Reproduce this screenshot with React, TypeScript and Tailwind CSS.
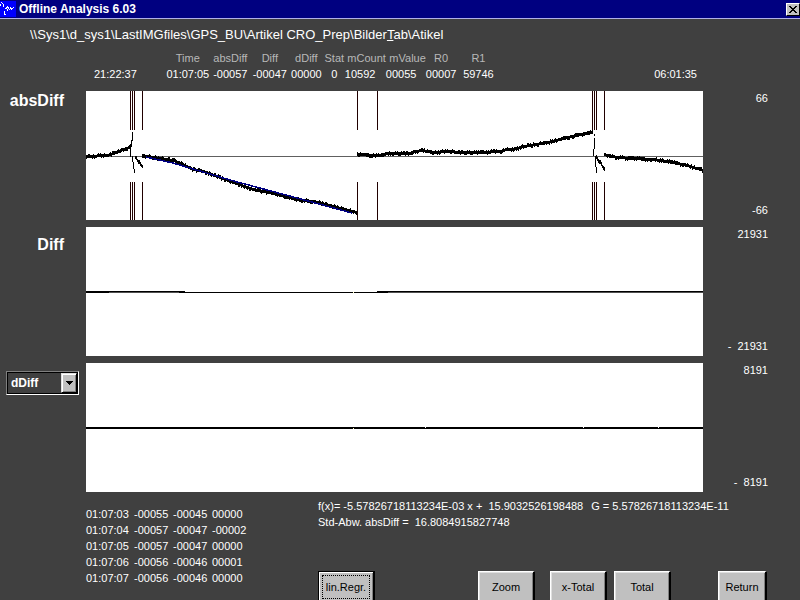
import { useState } from 'react';
import type { ReactNode } from 'react';
import clsx from 'clsx';

type Point = [number, number];

const COLUMNS: { label: string; value: string; width: string; th?: string; td?: string }[] = [
  { label: 'Time', value: '01:07:05', width: 'w-[44px]' },
  { label: 'absDiff', value: '-00057', width: 'w-[41px]' },
  { label: 'Diff', value: '-00047', width: 'w-[38px]' },
  { label: 'dDiff', value: '00000', width: 'w-[35px]' },
  { label: 'Stat', value: '0', width: 'w-[21px]' },
  { label: 'mCount', value: '10592', width: 'w-[41px]', th: 'text-right', td: 'text-left' },
  { label: 'mValue', value: '00055', width: 'w-[40px]', th: 'text-right', td: 'text-left' },
  { label: 'R0', value: '00007', width: 'w-[30px]' },
  { label: 'R1', value: '59746', width: 'w-[44px]' },
];

const LOG = [
  ['01:07:03', '-00055', '-00045', '00000'],
  ['01:07:04', '-00057', '-00047', '-00002'],
  ['01:07:05', '-00057', '-00047', '00000'],
  ['01:07:06', '-00056', '-00046', '00001'],
  ['01:07:07', '-00056', '-00046', '00000'],
];

const MARKERS = [44, 46, 48, 56, 271, 291, 506, 508, 510, 518];

const TRACES: Point[][] = [
  [[0, 65], [21, 64], [32, 60], [45, 55]],
  [[49, 66], [53, 71], [57, 76]],
  [[56, 65], [61, 65], [67, 66], [87, 69], [99, 74], [107, 78], [117, 80], [131, 85], [144, 90], [167, 98], [187, 102], [211, 108], [227, 110], [244, 114], [258, 118], [271, 121]],
  [[271, 63], [294, 64], [301, 62], [314, 62], [324, 62], [329, 60], [336, 59], [347, 61], [361, 60], [374, 61], [391, 61], [416, 60], [419, 58], [427, 58], [437, 55], [461, 51], [481, 46], [494, 43], [507, 41]],
  [[510, 66], [514, 71], [519, 80]],
  [[518, 63], [524, 65], [544, 67], [567, 68], [587, 71], [601, 74], [617, 79]],
];

/** One short vertical stroke per sample column, with a little measuring noise */
function noisyPath(points: Point[]) {
  let d = '';
  let seed = points[0][0] + 7;
  for (let i = 0; i < points.length - 1; i++) {
    const [x0, y0] = points[i];
    const [x1, y1] = points[i + 1];
    for (let x = x0; x < x1; x++) {
      seed = (seed * 1664525 + 1013904223) % 4294967296;
      const noise = Math.floor(seed / 65536) % 10;
      const y = Math.round(y0 + ((y1 - y0) * (x - x0)) / (x1 - x0));
      const top = noise < 3 ? y - 2 : y - 1;
      const bottom = noise > 6 ? y + 3 : y + 2;
      d += `M${x + 0.5} ${top}V${bottom}`;
    }
  }
  return d;
}

function Plot({ label, children }: { label: string; children: ReactNode }) {
  return (
    <svg
      role="img"
      aria-label={label}
      viewBox="0 0 617 129"
      preserveAspectRatio="none"
      shapeRendering="crispEdges"
      className="block h-[129px] w-full bg-white"
    >
      {children}
    </svg>
  );
}

function Scale({ max, min }: { max: string; min: string }) {
  return (
    <div className="flex flex-col justify-between pr-8 pb-[3px] text-right leading-[14px] whitespace-pre">
      <span>{max}</span>
      <span>{min}</span>
    </div>
  );
}

function PushButton({ children, className, focused }: { children: ReactNode; className?: string; focused?: boolean }) {
  return (
    <button
      type="button"
      className={clsx(
        'h-8 bg-[#c0c0c0] text-center text-[11px] leading-4 text-black',
        focused
          ? 'border border-r-2 border-black p-[3px] shadow-[inset_1px_1px_#ffffff,inset_-1px_-1px_#808080]'
          : 'border-t border-r-2 border-b border-l border-t-white border-r-black border-b-black border-l-white shadow-[inset_1px_1px_#dfdfdf,inset_-1px_-1px_#808080]',
        className,
      )}
    >
      {focused ? <span className="block border border-dotted border-black py-px leading-5">{children}</span> : children}
    </button>
  );
}

export default function App() {
  const [channel, setChannel] = useState('dDiff');

  return (
    <div className="h-screen overflow-hidden bg-[#404040] font-['Liberation_Sans',Arial,sans-serif] text-[11px] leading-4 text-white">
      {/* Title bar */}
      <header className="flex h-[19px] items-center border-b border-[#b0b0e8] bg-[#000080]">
        <svg viewBox="0 0 16 16" className="size-4 shrink-0 bg-[#0000ff]" shapeRendering="crispEdges" aria-hidden="true">
          <path
            d="M0.5 3v2M1.5 1v1M2.5 2v1M3.5 3v3M4.5 10v4M5.5 13v1M5.5 7v1M6.5 6v2M7.5 5v2M7.5 8v2M8.5 6v2M9.5 8v1M10.5 6v2M11.5 7v2M12.5 7v1M13.5 6v1"
            stroke="#fff"
          />
        </svg>
        <h1 className="ml-[3px] flex-1 text-[12px] font-bold">Offline Analysis 6.03</h1>
        <button
          type="button"
          aria-label="Close"
          className="grid h-[13px] w-[14px] place-items-center border border-t-white border-r-black border-b-black border-l-white bg-[#c0c0c0]"
        >
          <svg viewBox="0 0 8 7" className="h-[7px] w-2" shapeRendering="crispEdges" aria-hidden="true">
            <path d="M0 .5h2M6 .5h2M1 1.5h2M5 1.5h2M2 2.5h4M3 3.5h2M2 4.5h4M1 5.5h2M5 5.5h2M0 6.5h2M6 6.5h2" stroke="#000" />
          </svg>
        </button>
      </header>

      <p className="mt-2 pl-[30px] text-[13px]">
        {'\\\\Sys1\\d_sys1\\LastIMGfiles\\GPS_BU\\Artikel CRO_Prep\\Bilder'}
        <u>T</u>
        {'ab\\Atikel'}
      </p>

      {/* Cursor readout */}
      <div className="mt-[7px] mr-[97px] ml-[86px] flex items-end pr-[6px] pl-2">
        <time>21:22:37</time>
        <table className="ml-[29px] table-fixed border-collapse text-center whitespace-nowrap">
          <thead>
            <tr className="text-[#b8b8b8]">
              {COLUMNS.map((c) => (
                <th key={c.label} className={clsx('p-0 font-normal', c.width, c.th)}>
                  {c.label}
                </th>
              ))}
            </tr>
          </thead>
          <tbody>
            <tr>
              {COLUMNS.map((c) => (
                <td key={c.label} className={clsx('p-0', c.td)}>
                  {c.value}
                </td>
              ))}
            </tr>
          </tbody>
        </table>
        <time className="ml-auto">06:01:35</time>
      </div>

      {/* Charts */}
      <main className="mt-[9px] grid grid-cols-[86px_1fr_97px] gap-y-[7px]">
        <h2 className="pr-[22px] text-right text-[16px] leading-5 font-bold">absDiff</h2>
        <Plot label="absDiff">
          <path d="M0 65.5H617" stroke="#606060" />
          {MARKERS.map((x) => (
            <path key={x} d={`M${x + 0.5} 0V39M${x + 0.5} 91V129`} stroke="#200000" />
          ))}
          {TRACES.map((points) => (
            <path key={points[0][0]} d={noisyPath(points)} stroke="#000" />
          ))}
          <path d="M46.5 41V50M45.5 49V56M44.5 55V66M46.5 65V71M47.5 71V78M48.5 78V82" stroke="#000" />
          <path d="M508.5 43V45M508.5 47V58M507.5 58V65M509.5 65V76M510.5 76V82" stroke="#000" />
          <path d="M60 66L87 72L107 78L144 89L211 107L266 122" fill="none" stroke="#000080" strokeWidth="1.5" />
        </Plot>
        <Scale max="66" min="-66" />

        <h2 className="pt-2 pr-[22px] text-right text-[16px] leading-5 font-bold">Diff</h2>
        <Plot label="Diff">
          <path d="M0 65.5H617" stroke="#000" />
          <path d="M23 65.5H93M302 65.5H617" stroke="#505050" />
          <path d="M0 64.5H99M291 64.5H617" stroke="#000" />
          <path d="M267 65.5H268" stroke="#ffffc0" />
        </Plot>
        <Scale max="21931" min="-  21931" />

        <div className="pt-2 pr-[7px] pl-[6px]">
          <div className="relative h-6 border border-t-[#808080] border-r-white border-b-white border-l-[#808080]">
            <select
              aria-label="Channel"
              value={channel}
              onChange={(e) => setChannel(e.target.value)}
              className="block h-full w-full appearance-none border border-black bg-[#404040] pl-[3px] text-[12px] leading-4 font-bold text-white outline-none"
            >
              <option>dDiff</option>
              <option>Diff</option>
              <option>absDiff</option>
            </select>
            <span className="pointer-events-none absolute inset-y-px right-px grid w-4 place-items-center border border-t-[#dfdfdf] border-r-black border-b-black border-l-[#dfdfdf] bg-[#c0c0c0] shadow-[inset_1px_1px_#ffffff,inset_-1px_-1px_#808080]">
              <svg viewBox="0 0 7 4" className="h-1 w-[7px]" shapeRendering="crispEdges" aria-hidden="true">
                <path d="M0 .5h7M1 1.5h5M2 2.5h3M3 3.5h1" stroke="#000" />
              </svg>
            </span>
          </div>
        </div>
        <Plot label={channel}>
          <path d="M0 65H617" stroke="#000" strokeWidth="2" />
          <path d="M339 64.5h1M497 64.5h1M572 64.5h1" stroke="#fff" />
          <path d="M267 65.5h1" stroke="#ffffc0" />
        </Plot>
        <Scale max="8191" min="-  8191" />
      </main>

      <footer className="flex pl-[86px]">
        <div className="w-[232px] shrink-0 pt-[14px]">
          <table className="table-fixed border-collapse whitespace-nowrap">
            <tbody>
              {LOG.map((row) => (
                <tr key={row[0]}>
                  <td className="w-[48px] p-0">{row[0]}</td>
                  <td className="w-[39px] p-0">{row[1]}</td>
                  <td className="w-[39px] p-0">{row[2]}</td>
                  <td className="p-0">{row[3]}</td>
                </tr>
              ))}
            </tbody>
          </table>
        </div>

        <div className="flex-1 pt-[6px]">
          <div className="flex gap-2 whitespace-pre">
            <span>{'f(x)= -5.57826718113234E-03 x +  15.9032526198488'}</span>
            <span>G = 5.57826718113234E-11</span>
          </div>
          <p className="whitespace-pre">{'Std-Abw. absDiff =  16.8084915827748'}</p>

          <div className="mt-[41px] flex pr-[33px]">
            <PushButton className="w-[57px]" focused>
              lin.Regr.
            </PushButton>
            <PushButton className="ml-auto w-[57px]">Zoom</PushButton>
            <PushButton className="ml-[15px] w-[57px]">x-Total</PushButton>
            <PushButton className="ml-[7px] w-[57px]">Total</PushButton>
            <PushButton className="ml-[47px] w-[49px]">Return</PushButton>
          </div>
        </div>
      </footer>
    </div>
  );
}
